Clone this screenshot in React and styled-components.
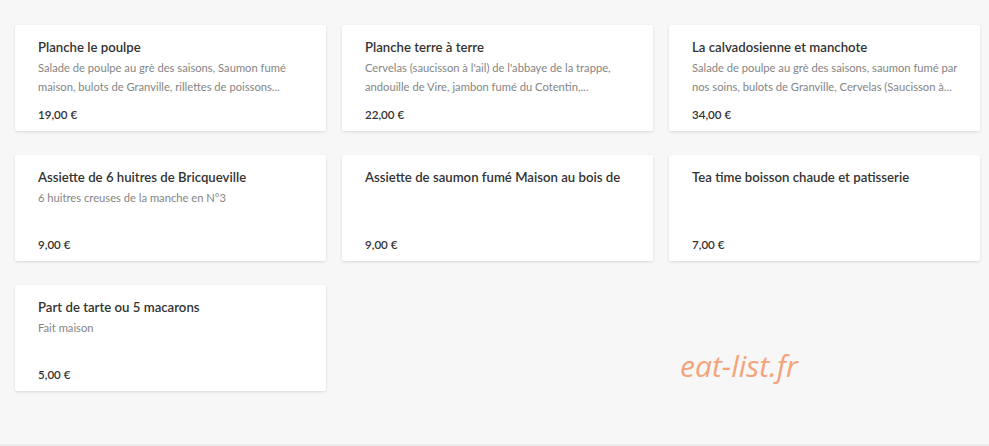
import React from 'react';
import styled, { createGlobalStyle } from 'styled-components';

const GlobalStyle = createGlobalStyle`
  html, body {
    margin: 0;
    padding: 0;
    background: #f7f7f7;
    font-family: Lato, "Open Sans", sans-serif;
  }
`;

const Page = styled.div`
  position: relative;
  width: 989px;
  height: 446px;
  box-sizing: border-box;
  padding: 25px 0 0 15px;
  background: #f7f7f7;
  border-bottom: 2px solid #ececec;
`;

const Grid = styled.div`
  display: grid;
  grid-template-columns: repeat(3, 311px);
  grid-auto-rows: 106px;
  column-gap: 16px;
  row-gap: 24px;
`;

const Card = styled.div`
  display: flex;
  flex-direction: column;
  box-sizing: border-box;
  padding: 12px 14px 7px 23px;
  background: #fff;
  border-radius: 2px;
  box-shadow: 0 1px 3px rgba(0, 0, 0, 0.12);
`;

const Title = styled.div`
  font-size: 13.2px;
  font-weight: 600;
  line-height: 20px;
  color: #333;
`;

const Description = styled.div`
  margin-top: 1px;
  font-size: 11.2px;
  line-height: 19px;
  color: #858585;
`;

const Price = styled.div`
  margin-top: auto;
  font-size: 11.6px;
  font-weight: 600;
  line-height: 18px;
  color: #333;
`;

const Watermark = styled.div`
  position: absolute;
  left: 680px;
  top: 345px;
  font-family: "Open Sans", sans-serif;
  font-style: italic;
  font-size: 30px;
  color: #f3a47a;
`;

const items = [
  {
    name: 'Planche le poulpe',
    desc: ['Salade de poulpe au grè des saisons, Saumon fumé', 'maison, bulots de Granville, rillettes de poissons...'],
    price: '19,00 €',
  },
  {
    name: 'Planche terre à terre',
    desc: ["Cervelas (saucisson à l'ail) de l'abbaye de la trappe,", 'andouille de Vire, jambon fumé du Cotentin,...'],
    price: '22,00 €',
  },
  {
    name: 'La calvadosienne et manchote',
    desc: ['Salade de poulpe au grè des saisons, saumon fumé par', 'nos soins, bulots de Granville, Cervelas (Saucisson à...'],
    price: '34,00 €',
  },
  {
    name: 'Assiette de 6 huitres de Bricqueville',
    desc: ['6 huitres creuses de la manche en N°3'],
    price: '9,00 €',
  },
  {
    name: 'Assiette de saumon fumé Maison au bois de',
    desc: [],
    price: '9,00 €',
  },
  {
    name: 'Tea time boisson chaude et patisserie',
    desc: [],
    price: '7,00 €',
  },
  {
    name: 'Part de tarte ou 5 macarons',
    desc: ['Fait maison'],
    price: '5,00 €',
  },
];

const App = () => (
  <>
    <GlobalStyle />
    <Page>
      <Grid>
        {items.map((item) => (
          <Card key={item.name}>
            <Title>{item.name}</Title>
            {item.desc.length > 0 && (
              <Description>
                {item.desc.map((line, i) => (
                  <div key={i}>{line}</div>
                ))}
              </Description>
            )}
            <Price>{item.price}</Price>
          </Card>
        ))}
      </Grid>
      <Watermark>eat-list.fr</Watermark>
    </Page>
  </>
);

export default App;
